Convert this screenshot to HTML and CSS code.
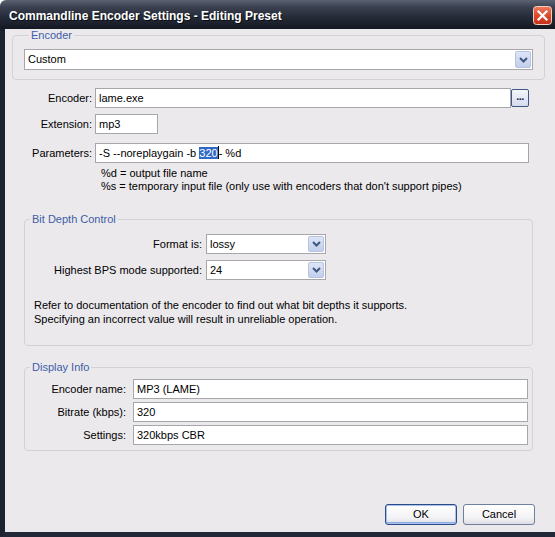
FILE: index.html
```html
<!DOCTYPE html>
<html>
<head>
<meta charset="utf-8">
<link rel="stylesheet" href="styles.css">
</head>
<body>
<div class="window">
  <div class="titlebar">
    <span class="title">Commandline Encoder Settings - Editing Preset</span>
    <svg class="close" width="19" height="19" viewBox="0 0 19 19">
      <defs>
        <linearGradient id="cg" x1="0" y1="0" x2="0" y2="1">
          <stop offset="0" stop-color="#f07a5e"/>
          <stop offset="0.5" stop-color="#de4a2c"/>
          <stop offset="1" stop-color="#c2301a"/>
        </linearGradient>
      </defs>
      <rect x="0.5" y="0.5" width="18" height="18" rx="3" fill="url(#cg)" stroke="#f4d0c4"/>
      <path d="M5.5 5.5 L13.5 13.5 M13.5 5.5 L5.5 13.5" stroke="#fff" stroke-width="2.2" stroke-linecap="square"/>
    </svg>
  </div>
  <div class="frame">
    <div class="body">
      <div class="group group-encoder">
        <div class="legend">Encoder</div>
        <div class="combo combo-encoder">
          <span class="combo-text">Custom</span>
          <span class="combo-btn"><svg width="9" height="6" viewBox="0 0 9 6"><path d="M1 1 L4.5 4.5 L8 1" fill="none" stroke="#3f5680" stroke-width="2"/></svg></span>
        </div>
      </div>

      <div class="cmd-form">
        <div class="frow row-encoder">
          <span class="lbl">Encoder:</span>
          <div class="input in-encoder">lame.exe</div>
          <div class="browse">...</div>
        </div>
        <div class="frow row-ext">
          <span class="lbl">Extension:</span>
          <div class="input in-ext">mp3</div>
        </div>
        <div class="frow row-params">
          <span class="lbl">Parameters:</span>
          <div class="input in-params">-S --noreplaygain -b <span class="sel">320</span><span class="caret"></span>- %d</div>
        </div>
        <div class="notes">
          <div>%d = output file name</div>
          <div>%s = temporary input file (only use with encoders that don't support pipes)</div>
        </div>
      </div>

      <div class="group group-bits">
        <div class="legend">Bit Depth Control</div>
        <div class="brow brow-first">
          <span class="blbl">Format is:</span>
          <div class="combo combo-small">
            <span class="combo-text">lossy</span>
            <span class="combo-btn"><svg width="9" height="6" viewBox="0 0 9 6"><path d="M1 1 L4.5 4.5 L8 1" fill="none" stroke="#3f5680" stroke-width="2"/></svg></span>
          </div>
        </div>
        <div class="brow brow-second">
          <span class="blbl">Highest BPS mode supported:</span>
          <div class="combo combo-small">
            <span class="combo-text">24</span>
            <span class="combo-btn"><svg width="9" height="6" viewBox="0 0 9 6"><path d="M1 1 L4.5 4.5 L8 1" fill="none" stroke="#3f5680" stroke-width="2"/></svg></span>
          </div>
        </div>
        <div class="bits-note">
          <div>Refer to documentation of the encoder to find out what bit depths it supports.</div>
          <div>Specifying an incorrect value will result in unreliable operation.</div>
        </div>
      </div>

      <div class="group group-display">
        <div class="legend">Display Info</div>
        <div class="drow drow-first">
          <span class="dlbl">Encoder name:</span>
          <div class="input in-display">MP3 (LAME)</div>
        </div>
        <div class="drow">
          <span class="dlbl">Bitrate (kbps):</span>
          <div class="input in-display">320</div>
        </div>
        <div class="drow">
          <span class="dlbl">Settings:</span>
          <div class="input in-display">320kbps CBR</div>
        </div>
      </div>

      <div class="buttons">
        <div class="btn btn-default">OK</div>
        <div class="btn">Cancel</div>
      </div>
    </div>
  </div>
</div>
</body>
</html>
```
FILE: styles.css
```css
html, body {
  margin: 0;
  padding: 0;
  background: #ffffff;
}

.window {
  width: 555px;
  height: 537px;
  display: flex;
  flex-direction: column;
  font-family: "Liberation Sans", Arial, sans-serif;
  font-size: 11px;
  color: #000;
}

.titlebar {
  height: 29px;
  flex: none;
  display: flex;
  align-items: center;
  justify-content: space-between;
  padding: 0 3px 0 9px;
  background: linear-gradient(#5b6272 0%, #3a404f 25%, #242a37 60%, #141822 100%);
  border-top-left-radius: 6px;
  box-sizing: border-box;
}

.title {
  color: #ffffff;
  font-weight: bold;
  font-size: 12px;
  letter-spacing: 0;
  text-shadow: 1px 1px 0 #0a0d14;
  padding-top: 3px;
}

.close {
  display: block;
  margin-top: 1px;
}

.frame {
  flex: 1;
  display: flex;
  border-left: 5px solid #1d2230;
  border-bottom: 5px solid #222837;
  box-shadow: inset 2px 0 0 #4d5565;
}

.body {
  flex: 1;
  display: flex;
  flex-direction: column;
  background: #ebe9ec;
  padding: 6px 10px 7px 7px;
}

.group {
  border: 1px solid #d3d1d8;
  border-radius: 4px;
}

.legend {
  width: fit-content;
  margin-top: -7px;
  margin-left: 5px;
  padding: 0 2px;
  line-height: 13px;
  height: 13px;
  color: #3e5ea6;
  background: #ebe9ec;
}

.group-encoder {
  height: 43px;
  padding: 0 11px;
}

.combo {
  display: flex;
  align-items: stretch;
  box-sizing: border-box;
  height: 21px;
  background: #fff;
  border: 1px solid #a6a6ab;
}

.combo-encoder {
  margin-top: 7px;
}

.combo-text {
  flex: 1;
  padding-left: 3px;
  line-height: 19px;
}

.combo-btn {
  width: 16px;
  margin: 1px;
  box-sizing: border-box;
  border: 1px solid #b6c4e3;
  border-radius: 2px;
  background: linear-gradient(#dde5f6, #c2cfec);
  display: flex;
  align-items: center;
  justify-content: center;
}

.cmd-form {
  margin-top: 8px;
}

.frow {
  display: flex;
  align-items: center;
}

.lbl {
  width: 80px;
  text-align: right;
  margin-right: 3px;
}

.input {
  box-sizing: border-box;
  height: 20px;
  line-height: 18px;
  background: #fff;
  border: 1px solid #a6a6ab;
  padding-left: 3px;
  white-space: nowrap;
}

.in-encoder {
  width: 416px;
}

.browse {
  box-sizing: border-box;
  width: 18px;
  height: 18px;
  border: 1px solid #3d5682;
  border-radius: 2px;
  background: linear-gradient(#f4f6fb, #d4dcef);
  text-align: center;
  line-height: 13px;
  font-weight: bold;
  color: #1d2c4a;
  letter-spacing: -0.5px;
}

.row-ext {
  margin-top: 6px;
}

.in-ext {
  width: 63px;
}

.row-params {
  margin-top: 9px;
}

.in-params {
  width: 434px;
}

.sel {
  background: #316ac5;
  color: #fff;
}

.caret {
  display: inline-block;
  width: 1px;
  height: 13px;
  background: #000;
  vertical-align: -2px;
}

.notes {
  margin-top: 4px;
  margin-left: 89px;
  line-height: 13px;
}

.group-bits {
  margin: 26px 12px 0 12px;
  height: 125px;
}

.brow {
  display: flex;
  align-items: center;
}

.brow-first {
  margin-top: 8px;
}

.brow-second {
  margin-top: 6px;
}

.blbl {
  width: 177px;
  text-align: right;
  margin-right: 4px;
}

.combo-small {
  width: 120px;
  height: 20px;
}

.combo-small .combo-text {
  line-height: 18px;
}

.combo-small .combo-btn {
  width: 16px;
}

.bits-note {
  margin-top: 18px;
  margin-left: 9px;
  line-height: 14px;
}

.group-display {
  margin: 21px 12px 0 12px;
  height: 82px;
}

.drow {
  display: flex;
  align-items: center;
  margin-top: 3px;
}

.drow-first {
  margin-top: 5px;
}

.dlbl {
  width: 101px;
  text-align: right;
  margin-right: 7px;
}

.in-display {
  width: 395px;
}

.buttons {
  margin-top: auto;
  display: flex;
  justify-content: flex-end;
  gap: 6px;
  padding-right: 10px;
}

.btn {
  box-sizing: border-box;
  width: 72px;
  height: 21px;
  border: 1px solid #6f7f9e;
  border-radius: 3px;
  background: linear-gradient(#ffffff, #f2f2f5 70%, #dcdce4);
  text-align: center;
  line-height: 19px;
}

.btn-default {
  border-color: #2b4a86;
  box-shadow: inset 0 0 0 1px #a9c1ee, inset 0 -1px 0 1px #8eabe2;
}
```
